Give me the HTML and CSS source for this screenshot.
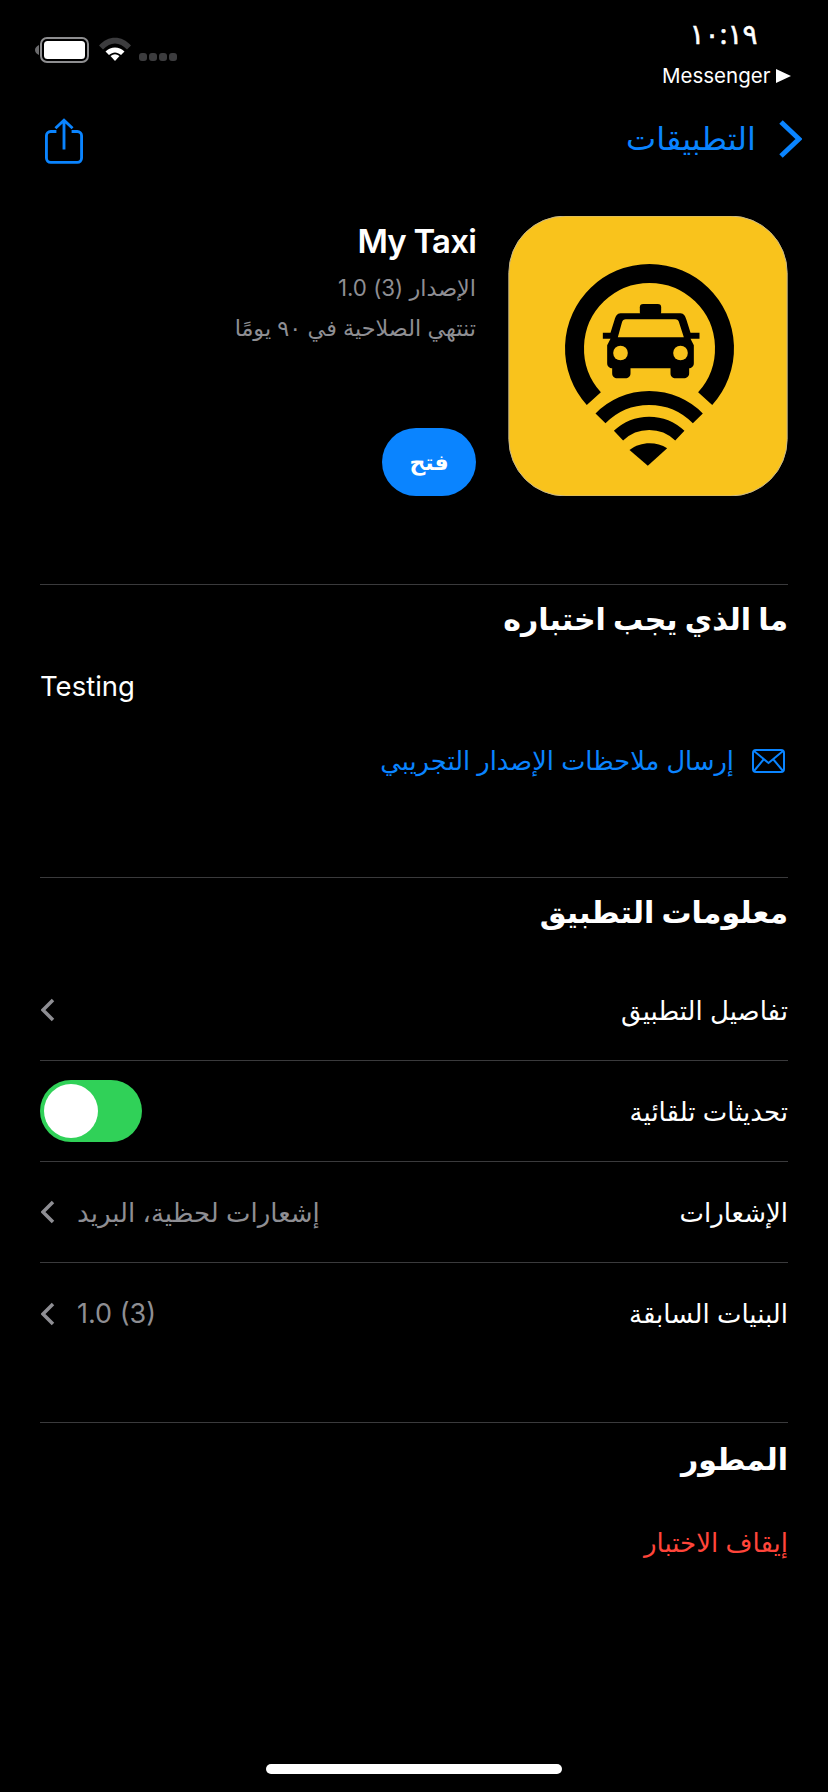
FILE: index.html
```html
<!DOCTYPE html>
<html lang="ar" dir="rtl">
<head>
    <meta charset="UTF-8">
    <meta name="viewport" content="width=device-width, initial-scale=1.0">
    <title>My Taxi</title>
    <link rel="stylesheet" href="styles.css">
</head>
<body>
    <div class="screen">
        <!-- Status bar -->
        <header class="status-bar">
            <div class="status-clock">
                <div class="time">١٠:١٩</div>
                <div class="breadcrumb" dir="ltr">
                    <span class="breadcrumb-label">Messenger</span>
                    <svg class="breadcrumb-arrow" viewBox="0 0 15 14"><path d="M0 0L15 7L0 14Z"/></svg>
                </div>
            </div>
            <div class="status-icons" dir="ltr">
                <svg class="battery" viewBox="0 0 54 26">
                    <path class="battery-nub" d="M4 8C1.500 9 0 11 0 13C0 15 1.500 17 4 18Z"/>
                    <rect class="battery-shell" x="6" y="1" width="47" height="24" rx="6"/>
                    <rect class="battery-fill" x="9" y="4" width="41" height="18" rx="3.500"/>
                </svg>
                <svg class="wifi" viewBox="0 0 32 24">
                    <path class="wifi-dim" d="M0 8.500C9 -2 23 -2 32 8.500L28 12.500C20.500 4.500 11.500 4.500 4 12.500Z"/>
                    <path class="wifi-on" d="M6.500 14.500C12 9 20 9 25.500 14.500L22 18C18 14.500 14 14.500 10 18Z"/>
                    <path class="wifi-on" d="M11.500 19C14.500 16.800 17.500 16.800 20.500 19L16 24Z"/>
                </svg>
                <div class="signal">
                    <span class="signal-dot"></span>
                    <span class="signal-dot"></span>
                    <span class="signal-dot"></span>
                    <span class="signal-dot"></span>
                </div>
            </div>
        </header>

        <!-- Navigation -->
        <nav class="nav-bar">
            <div class="nav-back">
                <svg class="nav-chevron" viewBox="0 0 24 38"><path d="M3 2L21 19L3 36"/></svg>
                <span class="nav-title">التطبيقات</span>
            </div>
            <svg class="share-icon" viewBox="0 0 40 48">
                <path d="M12 14H6C3.500 14 1.500 16 1.500 18.500V42C1.500 44.500 3.500 46.500 6 46.500H34C36.500 46.500 38.500 44.500 38.500 42V18.500C38.500 16 36.500 14 34 14H28"/>
                <path d="M20 33V2M11 10.500L20 2L29 10.500"/>
            </svg>
        </nav>

        <!-- App header -->
        <section class="app-head">
            <svg class="app-icon" viewBox="85 48 835 840">
                <rect class="app-icon-bg" x="85" y="48" width="835" height="840" rx="170"/>
                <path class="icon-stroke ring" d="M340 596A225 225 0 1 1 674 596"/>
                <path class="icon-stroke wave-outer" d="M360 655A205 205 0 0 1 652 655"/>
                <path class="icon-stroke wave-inner" d="M414 707A133 133 0 0 1 598 707"/>
                <path class="icon-ink" d="M447 750C480 724 528 724 560 745L502 797Z"/>
                <rect class="icon-ink" x="478" y="312" width="64" height="34" rx="10"/>
                <path class="icon-ink" d="M420 340H600C610 340 615 350 618 360L630 398H657V416H630L640 436V490C640 500 632 505 626 505V520C626 530 618 535 610 535H585C577 535 570 530 570 520V505H450V520C450 530 443 535 435 535H410C402 535 395 530 395 520V505C388 505 380 500 380 490V436L390 416H367V398H390L402 360C405 350 410 340 420 340Z"/>
                <path class="icon-bg" d="M412 412L424 368C426 361 430 358 436 358H584C590 358 594 361 596 368L610 412Z"/>
                <circle class="icon-bg" cx="420" cy="459" r="22"/>
                <circle class="icon-bg" cx="600" cy="459" r="22"/>
            </svg>
            <div class="app-meta">
                <h1 class="app-name" dir="ltr">My Taxi</h1>
                <div class="app-sub">الإصدار (3) 1.0</div>
                <div class="app-sub">تنتهي الصلاحية في ٩٠ يومًا</div>
                <button class="open-btn">فتح</button>
            </div>
        </section>

        <!-- What to test -->
        <section class="block block-test">
            <h2 class="block-title">ما الذي يجب اختباره</h2>
            <p class="test-note" dir="ltr">Testing</p>
            <div class="feedback-link">
                <svg class="mail-icon" viewBox="0 0 33 24">
                    <rect x="1" y="1" width="31" height="22" rx="3"/>
                    <path d="M2 2L16.500 14L31 2M2 22L12 10M31 22L21 10"/>
                </svg>
                <span>إرسال ملاحظات الإصدار التجريبي</span>
            </div>
        </section>

        <!-- App info -->
        <section class="block block-info">
            <h2 class="block-title">معلومات التطبيق</h2>
            <div class="info-rows">
                <div class="info-row">
                    <span class="row-label">تفاصيل التطبيق</span>
                    <div class="row-end">
                        <svg class="row-chevron" viewBox="0 0 14 24"><path d="M12 2L2 12L12 22"/></svg>
                    </div>
                </div>
                <div class="info-row">
                    <span class="row-label">تحديثات تلقائية</span>
                    <div class="toggle"><span class="toggle-knob"></span></div>
                </div>
                <div class="info-row">
                    <span class="row-label">الإشعارات</span>
                    <div class="row-end">
                        <span class="row-value">إشعارات لحظية، البريد</span>
                        <svg class="row-chevron" viewBox="0 0 14 24"><path d="M12 2L2 12L12 22"/></svg>
                    </div>
                </div>
                <div class="info-row">
                    <span class="row-label">البنيات السابقة</span>
                    <div class="row-end">
                        <span class="row-value row-value-num" dir="ltr">1.0 (3)</span>
                        <svg class="row-chevron" viewBox="0 0 14 24"><path d="M12 2L2 12L12 22"/></svg>
                    </div>
                </div>
            </div>
        </section>

        <!-- Developer -->
        <section class="block block-dev">
            <h2 class="block-title">المطور</h2>
            <div class="stop-link">إيقاف الاختبار</div>
        </section>

        <div class="home-indicator"></div>
    </div>
</body>
</html>
```

FILE: styles.css
```css
* {
    margin: 0;
    padding: 0;
    box-sizing: border-box;
}

body {
    background: #000;
    color: #fff;
    font-family: 'Inter', 'DejaVu Sans', sans-serif;
}

.screen {
    width: 828px;
    height: 1792px;
    display: flex;
    flex-direction: column;
    overflow: hidden;
}

/* Status bar */
.status-bar {
    height: 96px;
    display: flex;
    justify-content: space-between;
    padding: 0 25px 0 35px;
}

.status-clock {
    width: 141px;
    padding-top: 19px;
}

.time {
    font-size: 28px;
    line-height: 30px;
    letter-spacing: -1.500px;
    text-align: center;
    padding-right: 18px;
    -webkit-text-stroke: 0.5px #fff;
}

.breadcrumb {
    display: flex;
    align-items: center;
    gap: 6px;
    margin-top: 14px;
}

.breadcrumb-label {
    font-size: 20.500px;
    line-height: 26px;
}

.breadcrumb-arrow {
    width: 15px;
    height: 14px;
    fill: #fff;
}

.status-icons {
    display: flex;
    align-items: flex-start;
    padding-top: 37px;
    gap: 10px;
}

.battery {
    width: 54px;
    height: 26px;
}

.battery-nub {
    fill: #6b6b6d;
}

.battery-shell {
    fill: none;
    stroke: #8e8e90;
    stroke-width: 2;
}

.battery-fill {
    fill: #fff;
}

.wifi {
    width: 32px;
    height: 24px;
}

.wifi-dim {
    fill: #3c3c3e;
}

.wifi-on {
    fill: #fff;
}

.signal {
    display: flex;
    gap: 2px;
    margin-top: 16px;
    margin-left: -2px;
}

.signal-dot {
    width: 8px;
    height: 8px;
    border-radius: 3px;
    background: #3c3c3e;
}

/* Navigation */
.nav-bar {
    height: 84px;
    display: flex;
    justify-content: space-between;
    align-items: center;
    padding: 0 26px 0 45px;
}

.nav-back {
    display: flex;
    align-items: center;
    gap: 22px;
}

.nav-chevron {
    width: 24px;
    height: 38px;
    margin-top: 2px;
    fill: none;
    stroke: #0a84ff;
    stroke-width: 5;
}

.nav-title {
    font-size: 32px;
    color: #0a84ff;
}

.share-icon {
    width: 38px;
    height: 48px;
    margin-top: 6px;
    fill: none;
    stroke: #0a84ff;
    stroke-width: 3;
}

/* App header */
.app-head {
    display: flex;
    gap: 32px;
    padding: 36px 40px 0;
    height: 404px;
}

.app-icon {
    width: 280px;
    height: 280px;
}

.app-icon-bg,
.icon-bg {
    fill: #f9c31c;
}

.app-icon-bg {
    stroke: #c9b98a;
    stroke-width: 3;
}

.icon-bg {
    stroke: none;
}

.icon-ink {
    fill: #000;
}

.icon-stroke {
    fill: none;
    stroke: #000;
}

.ring {
    stroke-width: 57;
}

.wave-outer {
    stroke-width: 42;
}

.wave-inner {
    stroke-width: 40;
}

.app-meta {
    flex: 1;
    height: 280px;
    display: flex;
    flex-direction: column;
    align-items: flex-start;
}

.app-name {
    font-size: 33px;
    line-height: 44px;
    font-weight: 600;
    letter-spacing: -0.800px;
    margin-top: 3px;
    margin-bottom: 5px;
}

.app-sub {
    font-size: 22.300px;
    line-height: 40px;
    color: #8e8e93;
}

.open-btn {
    margin-top: auto;
    width: 94px;
    height: 68px;
    border: none;
    border-radius: 34px;
    background: #0a84ff;
    color: #fff;
    font-family: inherit;
    font-size: 22px;
    font-weight: 700;
}

/* Sections */
.block {
    margin: 0 40px;
    border-top: 1px solid #3a3a3c;
    padding-top: 13px;
}

.block-title {
    font-size: 30px;
    line-height: 42px;
    font-weight: 700;
}

.block-test {
    height: 293px;
}

.test-note {
    font-size: 27.500px;
    line-height: 34px;
    margin-top: 29px;
    text-align: left;
}

.feedback-link {
    display: flex;
    align-items: center;
    gap: 18px;
    margin-top: 40px;
    padding-right: 3px;
    font-size: 25.700px;
    line-height: 36px;
    color: #0a84ff;
}

.mail-icon {
    width: 33px;
    height: 24px;
    fill: none;
    stroke: #0a84ff;
    stroke-width: 2;
}

.block-info {
    height: 545px;
}

.info-rows {
    margin-top: 27px;
}

.info-row {
    height: 101px;
    display: flex;
    justify-content: space-between;
    align-items: center;
    border-bottom: 1px solid #3a3a3c;
}

.info-row:last-child {
    border-bottom: none;
}

.row-label {
    font-size: 26px;
}

.row-end {
    display: flex;
    align-items: center;
    gap: 22px;
    padding-left: 1px;
}

.row-value {
    font-size: 26px;
    color: #8e8e93;
}

.row-value-num {
    font-size: 27px;
}

.row-chevron {
    width: 14px;
    height: 24px;
    fill: none;
    stroke: #8e8e93;
    stroke-width: 3.500;
}

.toggle {
    width: 102px;
    height: 62px;
    border-radius: 31px;
    background: #30d158;
    display: flex;
    justify-content: flex-end;
    align-items: center;
    padding: 0 4px;
}

.toggle-knob {
    width: 54px;
    height: 54px;
    border-radius: 50%;
    background: #fff;
}

.block-dev .block-title {
    margin-top: 2px;
}

.stop-link {
    font-size: 26px;
    line-height: 36px;
    color: #ff453a;
    margin-top: 45px;
}

/* Home indicator */
.home-indicator {
    width: 296px;
    height: 10px;
    border-radius: 5px;
    background: #fff;
    margin: auto auto 18px;
}
```
